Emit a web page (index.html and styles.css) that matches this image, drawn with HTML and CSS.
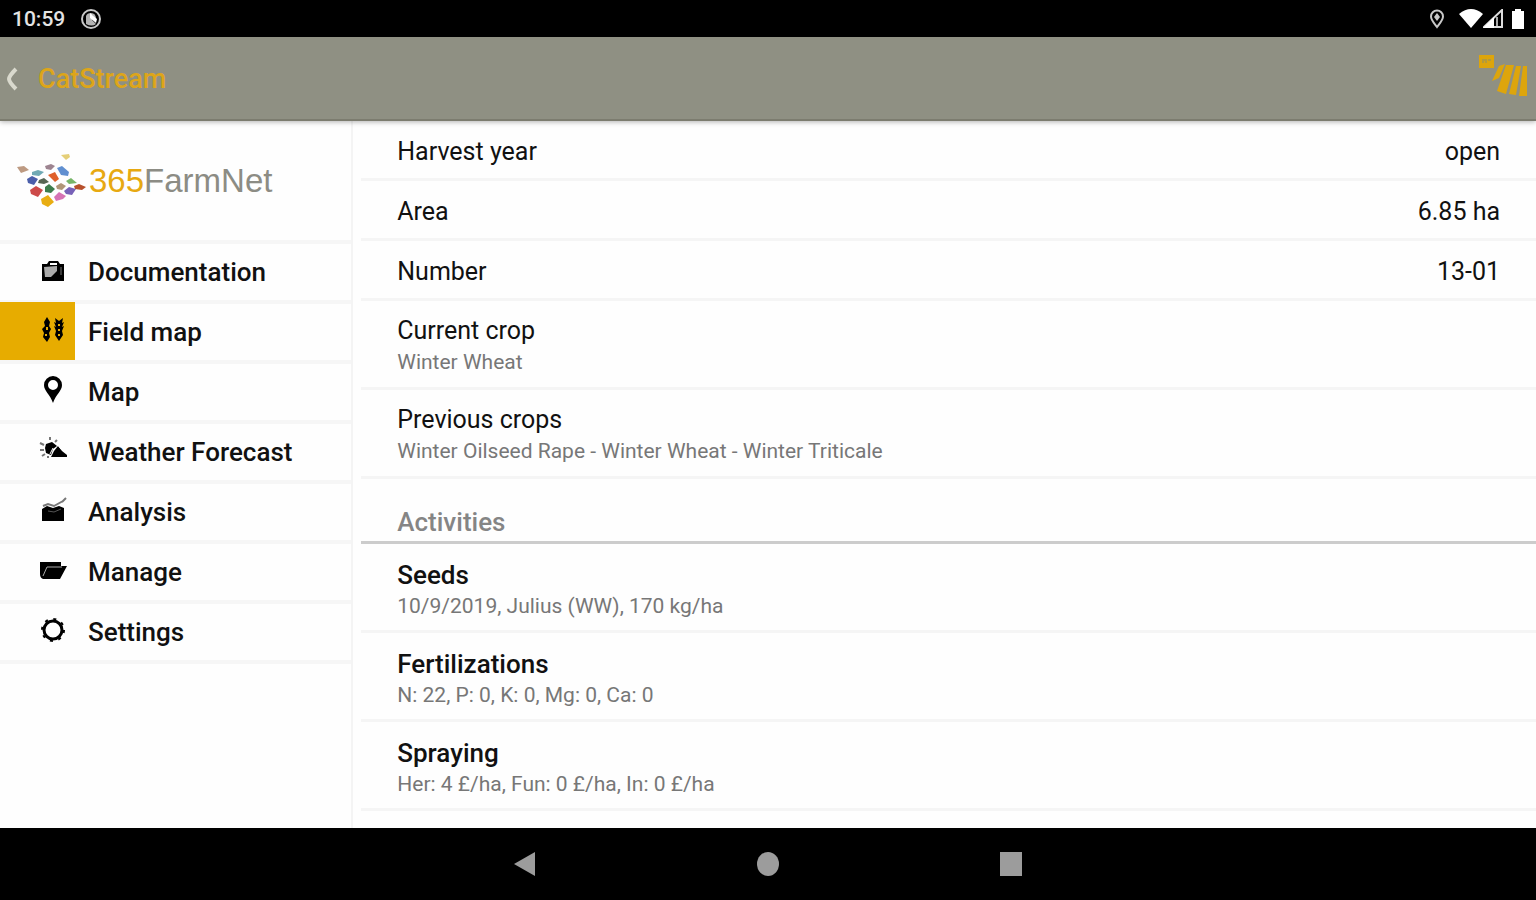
FILE: index.html
```
<!DOCTYPE html>
<html lang="en">
<head>
  <meta charset="UTF-8" />
  <meta name="viewport" content="width=device-width, initial-scale=1" />
  <title>365FarmNet - CatStream</title>
  <link rel="stylesheet" href="styles.css">
</head>
<body>
  <div class="status-bar">
    <span class="time">10:59</span>
    <svg class="status-app" width="24" height="24" viewBox="0 0 24 24">
      <circle cx="12" cy="12" r="9" fill="none" stroke="#c8c8c8" stroke-width="2" />
      <path d="M7 17V9q1-3 5-3 5 0 5 6l-4-4v5l4 4q-4 3-10 0z" fill="#b4b4b4" />
      <path d="M11 6l7 6-1 4-6-5z" fill="#fff" />
    </svg>
    <div class="status-icons">
      <svg width="16" height="20" viewBox="0 0 16 20">
        <path d="M8 18C5 14 2 11 2 7.500a6 6 0 0 1 12 0C14 11 11 14 8 18z" fill="none" stroke="#c8c8c8" stroke-width="2" />
        <path d="M8 4l3 4-3 4-3-4z" fill="#c8c8c8" />
      </svg>
      <svg class="wifi" width="24" height="20" viewBox="0 0 24 20">
        <path d="M0 5Q12-5 24 5L12 19z" fill="#fff" />
      </svg>
      <svg width="20" height="20" viewBox="0 0 20 20">
        <path d="M1 18L19 1v17z" fill="none" stroke="#ddd" stroke-width="2" />
        <path d="M0 19L11 8v11z" fill="#fff" />
        <path d="M14 8v9" stroke="#aaa" stroke-width="2" />
      </svg>
      <svg class="battery" width="12" height="20" viewBox="0 0 12 20">
        <path d="M3 0h6v2h3v18H0V2h3z" fill="#fff" />
      </svg>
    </div>
  </div>

  <header class="app-bar">
    <button class="back" type="button" aria-label="Back">
      <svg width="12" height="24" viewBox="0 0 12 24">
        <path d="M10 2Q3 9 3 12t7 10" fill="none" stroke="#d9d9cd" stroke-width="4" />
      </svg>
    </button>
    <h1>CatStream</h1>
    <button class="fields" type="button" aria-label="Fields">
      <svg width="50" height="42" viewBox="0 0 50 42">
        <path d="M1 1h15v13H1z" fill="#dda50c" />
        <path d="M5 9V6h3v3M10 6h3" fill="none" stroke="#b39a3c" stroke-width="2" />
        <path d="M21 12l6-2-6 14-7 3zM28 11h8l-8 29-9-3zM38 12h5l-5 29-7-1zM45 12h4v30h-8z" fill="#dda50c" />
      </svg>
    </button>
  </header>

  <div class="page">
    <aside class="sidebar">
      <div class="logo">
        <svg width="71" height="54" viewBox="0 0 71 54">
          <path d="M45 1l8-1 1 3-4 3z" fill="#e5cf78" />
          <path d="M1 13l7-1 5 4-8 3z" fill="#bd9a82" />
          <path d="M16 18l6-2 6 2-5 4-7-1z" fill="#70a9b4" />
          <path d="M29 12l6-2 4 2-4 4-5-1z" fill="#9d8490" />
          <path d="M41 14l5-2 7 6-1 4-7-1z" fill="#608fd0" />
          <path d="M11 25l5-3 6 3-4 6-6-2z" fill="#4b5eaa" />
          <path d="M23 26l5-2 5 4-5 2-6-1z" fill="#576653" />
          <path d="M32 21l7-3 4 7-4 3z" fill="#df602b" />
          <path d="M50 27l5-3 6 5-8 1z" fill="#77b568" />
          <path d="M14 36l6-4 7 4-5 7-7-3z" fill="#cc4a49" />
          <path d="M29 33l4-3 6 5-4 4-6-1z" fill="#3d7d4d" />
          <path d="M40 32l5-3 5 3-4 4-5-1z" fill="#b09678" />
          <path d="M48 37l5-4 7 2-4 6-6-1z" fill="#7761b8" />
          <path d="M58 32l5-2 7 3-4 3-7-1z" fill="#b7502c" />
          <path d="M38 43l5-5 7 4-3 3-7 2z" fill="#d673b5" />
          <path d="M25 45l7-4 6 7-6 5-6-3z" fill="#e8ad12" />
        </svg>
        <span class="logo-text"><b>365</b>FarmNet</span>
      </div>

      <nav>
        <a class="nav-item" href="#documentation">
          <span class="nav-icon">
            <svg width="28" height="28" viewBox="0 0 28 28">
              <path d="M3 8h5l2-3h9l2 3h4v17H3z" />
              <path d="M11 7h7v2h-7z" fill="#fff" />
              <path d="M5 11l13-1v5l-6 6H6z" fill="#aaa" />
              <path d="M22 11v8" stroke="#777" stroke-width="1" />
            </svg>
          </span>
          Documentation
        </a>
        <a class="nav-item active" href="#field-map">
          <span class="nav-icon">
            <svg width="28" height="28" viewBox="0 0 28 28">
              <path d="M8 1l3 5-1 4 2 3-2 4 1 4-3 5-4-5 1-4-2-4 3-3-1-4z" />
              <path d="M16 2l4 3 4-3-1 5 2-1-2 5 2-1-2 5 1 4-4 6-4-6 1-4-2-5 2 1-2-5 2 1z" />
              <path d="M8 11v3M7 18v2M20 8v2M20 13v2M20 18v2" stroke="#e7ac00" stroke-width="2" />
            </svg>
          </span>
          Field map
        </a>
        <a class="nav-item" href="#map">
          <span class="nav-icon">
            <svg width="28" height="28" viewBox="0 0 28 28">
              <path fill-rule="evenodd" d="M14 0a9 9 0 0 1 9 9c0 6-6 9-9 18C11 18 5 15 5 9a9 9 0 0 1 9-9zM14 4a5 5 0 1 0 0 10 5 5 0 0 0 0-10z" />
            </svg>
          </span>
          Map
        </a>
        <a class="nav-item" href="#weather">
          <span class="nav-icon">
            <svg width="28" height="28" viewBox="0 0 28 28">
              <path d="M7 8l6-2 5 4-4 3-2 6-5-2-1-5z" />
              <path d="M12 21l3-6 4-5 4 5 5 4v2z" />
              <path d="M1 7l4 2M11 1v3M18 4l-2 2M1 14h4M3 20l3-2M9 20v2" stroke="#777" stroke-width="2" />
              <path d="M14 12l-3 6M19 9l3 4" stroke="#fff" stroke-width="1" />
            </svg>
          </span>
          Weather Forecast
        </a>
        <a class="nav-item" href="#analysis">
          <span class="nav-icon">
            <svg width="28" height="28" viewBox="0 0 28 28">
              <path d="M3 13l5-3 6 2 6-2 5 2v13H3z" />
              <path d="M4 10l5-2 6 2 9-5M27 2l-4 4" fill="none" stroke="#777" stroke-width="2" />
              <path d="M9 15l6 1 7-3" fill="none" stroke="#555" stroke-width="1" />
            </svg>
          </span>
          Analysis
        </a>
        <a class="nav-item" href="#manage">
          <span class="nav-icon">
            <svg width="28" height="28" viewBox="0 0 28 28">
              <path d="M1 6h21v4h6l-7 13H4q-3-1-3-5z" />
              <path d="M4 20l4-9h15" fill="none" stroke="#aaa" stroke-width="1" />
            </svg>
          </span>
          Manage
        </a>
        <a class="nav-item" href="#settings">
          <span class="nav-icon">
            <svg width="28" height="28" viewBox="0 0 28 28">
              <circle cx="14" cy="14" r="9" fill="none" stroke="#000" stroke-width="3" />
              <circle cx="14" cy="14" r="11" fill="none" stroke="#000" stroke-width="2" stroke-dasharray="3 5.640" />
            </svg>
          </span>
          Settings
        </a>
      </nav>
    </aside>

    <main class="details">
      <div class="row"><span>Harvest year</span><span>open</span></div>
      <div class="row"><span>Area</span><span>6.85 ha</span></div>
      <div class="row"><span>Number</span><span>13-01</span></div>
      <div class="row-double">
        <div class="title">Current crop</div>
        <div class="sub">Winter Wheat</div>
      </div>
      <div class="row-double">
        <div class="title">Previous crops</div>
        <div class="sub">Winter Oilseed Rape - Winter Wheat - Winter Triticale</div>
      </div>

      <h2>Activities</h2>
      <div class="row-double activity">
        <div class="title">Seeds</div>
        <div class="sub">10/9/2019, Julius (WW), 170 kg/ha</div>
      </div>
      <div class="row-double activity">
        <div class="title">Fertilizations</div>
        <div class="sub">N: 22, P: 0, K: 0, Mg: 0, Ca: 0</div>
      </div>
      <div class="row-double activity">
        <div class="title">Spraying</div>
        <div class="sub">Her: 4 £/ha, Fun: 0 £/ha, In: 0 £/ha</div>
      </div>
    </main>
  </div>

  <footer class="system-nav">
    <button type="button" aria-label="Back">
      <svg width="24" height="26" viewBox="0 0 24 26"><path d="M22 1v24L1 13z" fill="#9c9c9c" /></svg>
    </button>
    <button type="button" aria-label="Home">
      <svg width="24" height="26" viewBox="0 0 24 26"><ellipse cx="12" cy="13" rx="11" ry="12" fill="#9c9c9c" /></svg>
    </button>
    <button type="button" aria-label="Recent apps">
      <svg width="24" height="26" viewBox="0 0 24 26"><path d="M1 1h22v24H1z" fill="#9c9c9c" /></svg>
    </button>
  </footer>
</body>
</html>
```
FILE: styles.css
```
* {
  box-sizing: border-box;
}

body {
  margin: 0;
  min-height: 100vh;
  display: flex;
  flex-direction: column;
  background: #fefefe;
  color: #111;
  font-family: Roboto, "Liberation Sans", sans-serif;
  font-size: 25px;
  line-height: 28px;
}

button {
  border: 0;
  padding: 0;
  background: none;
  cursor: pointer;
}

svg {
  display: block;
}

/* Status bar */
.status-bar {
  height: 37px;
  display: flex;
  align-items: center;
  padding: 0 12px;
  background: #000;
  color: #e4e4e4;
  font-size: 21px;
  font-weight: 500;
}

.status-app {
  margin-left: 14px;
}

.status-icons {
  display: flex;
  align-items: center;
  margin-left: auto;
}

.wifi {
  margin-left: 14px;
}

.battery {
  margin-left: 9px;
}

/* App bar */
.app-bar {
  height: 84px;
  display: flex;
  align-items: center;
  padding: 2px 8px 0 6px;
  background: #8f9083;
  border-bottom: 2px solid #7c7c6f;
  box-shadow: 0 1px 5px rgba(0, 0, 0, 0.3);
  z-index: 1;
}

.app-bar h1 {
  margin: 0 0 0 20px;
  color: #dda51a;
  font-size: 27px;
  font-weight: 500;
}

.fields {
  margin-left: auto;
  padding-bottom: 8px;
}

.page {
  flex: 1;
  display: flex;
}

/* Sidebar */
.sidebar {
  width: 23%;
  min-width: 320px;
  margin-right: 8px;
  border-right: 2px solid #f4f4f4;
}

.logo {
  height: 123px;
  display: flex;
  align-items: center;
  padding-left: 16px;
  border-bottom: 4px solid #f6f6f6;
}

.logo-text {
  margin-left: 2px;
  color: #8c8c84;
  font-family: "Liberation Sans", Arial, sans-serif;
  font-size: 33px;
}

.logo-text b {
  color: #e7a911;
  font-weight: normal;
}

.nav-item {
  height: 60px;
  display: flex;
  align-items: center;
  border-bottom: 4px solid #f6f6f6;
  color: #111;
  font-size: 26px;
  font-weight: 500;
  text-decoration: none;
}

.nav-icon {
  width: 75px;
  height: 100%;
  margin-right: 13px;
  padding: 12px 0 0 39px;
}

.active .nav-icon {
  background: #e7ac00;
  box-shadow: 0 -2px 0 #e7ac00;
}

/* Field details */
.details {
  flex: 1;
}

.row {
  height: 60px;
  display: flex;
  align-items: center;
  justify-content: space-between;
  padding: 4px 36px 0;
  border-bottom: 3px solid #f5f5f5;
}

.row-double {
  padding: 16px 36px 11px;
  border-bottom: 3px solid #f5f5f5;
}

.sub {
  margin-top: 3px;
  color: #777;
  font-size: 21px;
}

.details h2 {
  margin: 0;
  padding: 29px 36px 5px;
  border-bottom: 3px solid #ccc;
  color: #858585;
  font-size: 26px;
  font-weight: 500;
}

.activity {
  padding: 17px 36px 10px;
}

.activity .title {
  font-size: 26px;
  font-weight: 500;
}

/* System navigation */
.system-nav {
  height: 72px;
  display: flex;
  align-items: center;
  justify-content: center;
  background: #000;
}

.system-nav button {
  width: 243px;
  height: 72px;
  display: flex;
  align-items: center;
  justify-content: center;
}
```
